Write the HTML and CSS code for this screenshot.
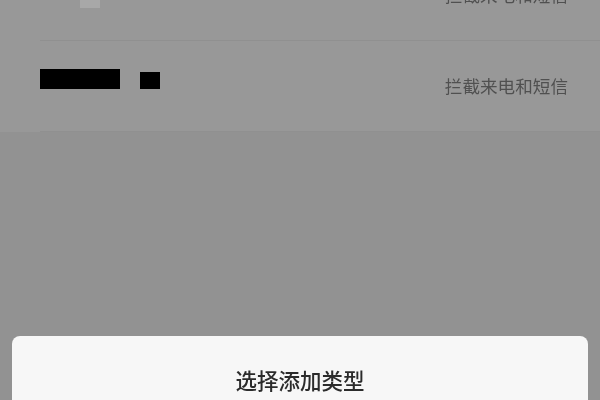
FILE: index.html
```html
<!DOCTYPE html>
<html lang="zh-CN">
  <head>
    <meta charset="UTF-8" />
    <meta name="viewport" content="width=device-width, initial-scale=1.0" />
    <title>选择添加类型</title>
    <link rel="stylesheet" href="styles.css">
  </head>
  <body>
    <div class="list">
      <div class="row">
        <div class="name">
          <span class="mask-faded"></span>
        </div>
        <span class="desc">拦截来电和短信</span>
      </div>
      <div class="row">
        <div class="name">
          <span class="mask-long"></span>
          <span class="mask-short"></span>
        </div>
        <span class="desc">拦截来电和短信</span>
      </div>
    </div>
    <div class="sheet">
      <h1 class="sheet-title">选择添加类型</h1>
    </div>
  </body>
</html>
```

FILE: styles.css
```css
html,
body {
  height: 100%;
}
body {
  margin: 0;
  display: flex;
  flex-direction: column;
  overflow: hidden;
  background-color: #929292;
  font-family: "Liberation Sans", "Noto Sans CJK SC", sans-serif;
}
.list {
  flex-shrink: 0;
  margin-top: -50px;
  background-color: #989898;
}
.row {
  height: 90px;
  margin-left: 40px;
  padding-right: 32px;
  display: flex;
  align-items: center;
  justify-content: space-between;
  border-bottom: 1px solid #909090;
}
.name {
  display: flex;
  align-items: flex-end;
  gap: 20px;
  margin-bottom: 14px;
}
.mask-faded {
  width: 20px;
  height: 20px;
  margin-left: 40px;
  margin-top: 20px;
  background-color: #a8a8a8;
}
.mask-long {
  width: 80px;
  height: 20px;
  background-color: #000;
}
.mask-short {
  width: 20px;
  height: 17px;
  background-color: #000;
}
.desc {
  margin-bottom: 2px;
  font-size: 17.6px;
  color: #505050;
  filter: blur(0.4px);
}
.sheet {
  flex-shrink: 0;
  height: 64px;
  margin: auto 12px 0;
  border-radius: 8px 8px 0 0;
  background-color: #f7f7f7;
  text-align: center;
}
.sheet-title {
  margin: 33px 0 0;
  font-size: 21.5px;
  font-weight: 500;
  line-height: 26px;
  color: #2b2b2b;
  filter: blur(0.3px);
}
```
